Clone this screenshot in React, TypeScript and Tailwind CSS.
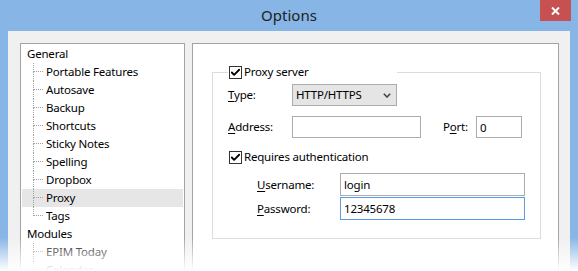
import { Check } from "lucide-react";

const TREE_LINE = "border-dotted border-[#a0a0a0]";

function TreeRoot({ label }: { label: string }) {
  return <div className="h-[18px] pl-[5px] leading-[18px]">{label}</div>;
}

function TreeChild({ label, last, selected }: { label: string; last?: boolean; selected?: boolean }) {
  return (
    <div className={`flex h-[18px] ${selected ? "bg-[#e6e6e6]" : ""}`}>
      <div className="ml-[11px] flex w-[10px] flex-col">
        <div className={`h-[9px] border-b border-l ${TREE_LINE}`} />
        <div className={`flex-1 ${last ? "" : `border-l ${TREE_LINE}`}`} />
      </div>
      <span className="ml-[3px] leading-[18px]">{label}</span>
    </div>
  );
}

function CheckBox() {
  return (
    <span className="flex h-[13px] w-[13px] shrink-0 items-center justify-center border border-[#333] bg-white">
      <Check size={11} strokeWidth={4} className="text-black" />
    </span>
  );
}

// label with an underlined access key
function Label({ text, k, className }: { text: string; k: number; className: string }) {
  return (
    <span className={className}>
      {text.slice(0, k)}
      <span className="underline underline-offset-2">{text[k]}</span>
      {text.slice(k + 1)}
    </span>
  );
}

const INPUT = "h-full border bg-white px-[3px] text-black outline-none";

export default function App() {
  const general = ["Portable Features", "Autosave", "Backup", "Shortcuts", "Sticky Notes", "Spelling", "Dropbox", "Proxy", "Tags"];
  const modules = ["EPIM Today", "Calendar", "Contacts", "Tasks"];

  return (
    <div className="relative flex h-[271px] w-[578px] flex-col overflow-hidden bg-[#86b5e6] px-[8px] font-['Noto_Sans','Open_Sans',sans-serif] text-[11.5px] tracking-[-0.2px] text-black">
      <div className="flex h-[31px] shrink-0 items-center justify-center pb-[1px] text-[15px] tracking-normal text-[#222]">Options</div>
      <div className="absolute right-[7px] top-0 flex h-[21px] w-[31px] items-center justify-center bg-[#c75050]">
        <svg width="9" height="8" viewBox="0 0 9 8">
          <path d="M1 0.5 L8 7.5 M8 0.5 L1 7.5" stroke="white" strokeWidth="2" />
        </svg>
      </div>

      <div className="flex flex-1 gap-[7px] bg-[#f0f0f0] pl-[12px] pt-[12px]">
        {/* tree */}
        <div className="h-[260px] w-[165px] shrink-0 border border-[#a3a3a3] bg-white px-[1px] pt-[1px]">
          <TreeRoot label="General" />
          {general.map((g, i) => (
            <TreeChild key={g} label={g} last={i === general.length - 1} selected={g === "Proxy"} />
          ))}
          <TreeRoot label="Modules" />
          {modules.map((m, i) => (
            <TreeChild key={m} label={m} last={i === modules.length - 1} />
          ))}
        </div>

        {/* settings page */}
        <div className="h-[260px] w-[367px] shrink-0 border border-[#a3a3a3] bg-white pl-[19px] pt-[20px]">
          <fieldset className="w-[329px] border border-[#dcdcdc] pb-[18px] pl-[15px]">
            <legend className="flex h-[16px] w-[169px] items-center bg-white pl-[1px]">
              <CheckBox />
              <span className="ml-[2px]">Proxy server</span>
            </legend>

            <div className="mt-[4px] flex h-[22px] items-center">
              <Label text="Type:" k={0} className="w-[64px]" />
              <div className="flex h-full w-[105px] items-center justify-between border border-[#acacac] bg-[#e5e5e5] pl-[3px] pr-[5px]">
                <span>HTTP/HTTPS</span>
                <svg width="8" height="5" viewBox="0 0 8 5">
                  <path d="M0.8 0.8 L4 4 L7.2 0.8" fill="none" stroke="#444" strokeWidth="1.6" />
                </svg>
              </div>
            </div>

            <div className="mt-[10px] flex h-[22px] items-center">
              <Label text="Address:" k={0} className="w-[64px]" />
              <input readOnly defaultValue="" className={`${INPUT} w-[129px] border-[#acacac]`} />
              <Label text="Port:" k={1} className="ml-[22px] w-[33px]" />
              <input readOnly defaultValue="0" className={`${INPUT} w-[46px] border-[#acacac]`} />
            </div>

            <div className="mt-[10px] flex h-[18px] items-center pl-[1px]">
              <CheckBox />
              <span className="ml-[2px]">Requires authentication</span>
            </div>

            <div className="mt-[7px] flex h-[23px] items-center pl-[29px]">
              <Label text="Username:" k={0} className="w-[83px]" />
              <input readOnly defaultValue="login" className={`${INPUT} w-[185px] border-[#acacac]`} />
            </div>

            <div className="mt-[1px] flex h-[23px] items-center pl-[29px]">
              <Label text="Password:" k={0} className="w-[83px]" />
              <input readOnly defaultValue="12345678" className={`${INPUT} w-[185px] border-[#569de5]`} />
            </div>
          </fieldset>
        </div>
      </div>

      {/* fade out at the bottom edge */}
      <div className="pointer-events-none absolute inset-x-0 bottom-0 h-[34px] bg-linear-to-b from-white/0 to-white" />
    </div>
  );
}
